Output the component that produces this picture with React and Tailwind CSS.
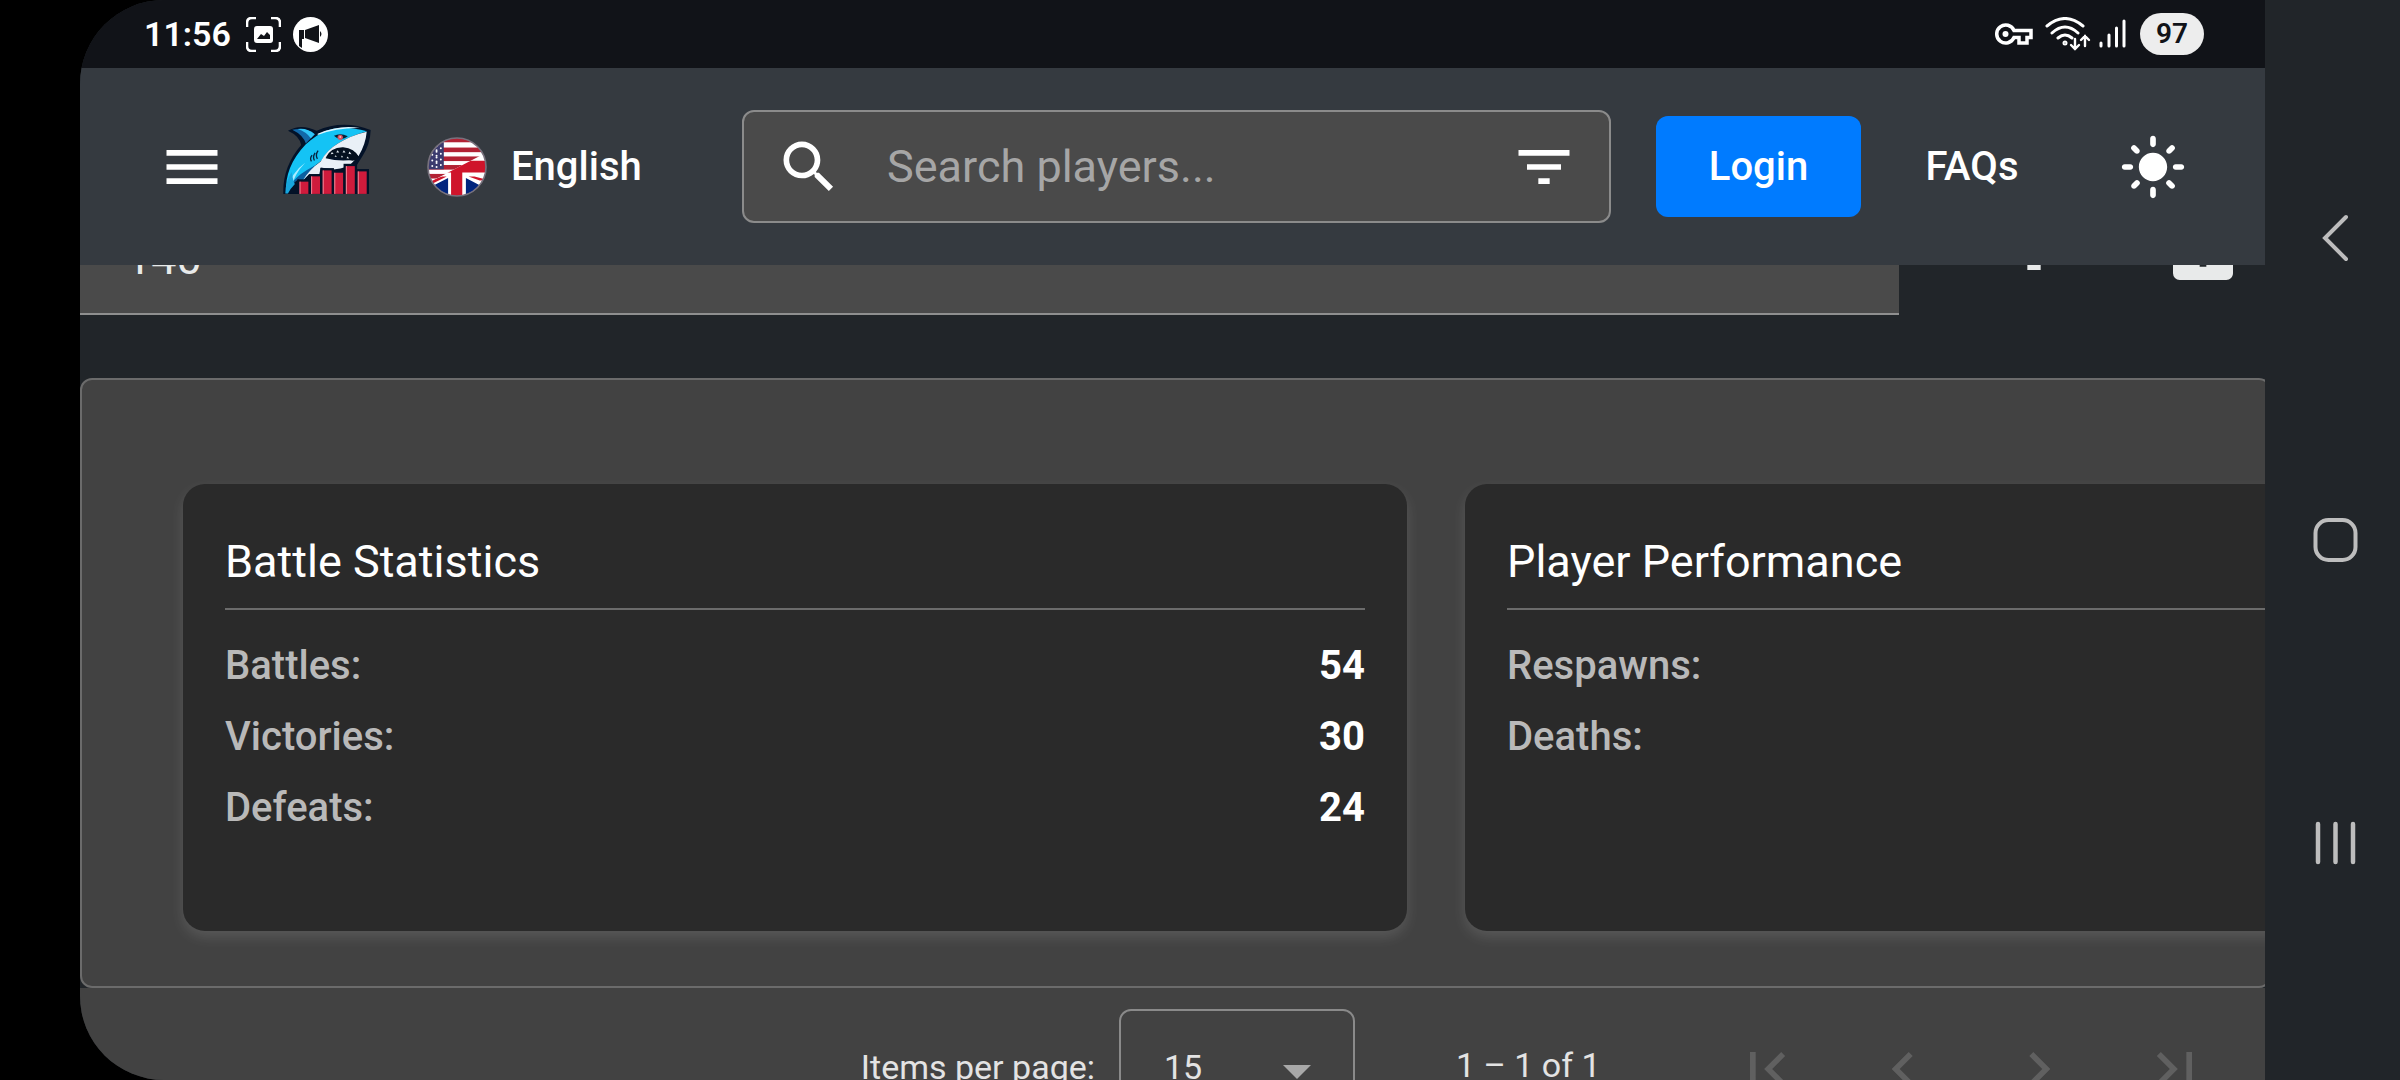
import React, { useState } from 'react';
import {
  MdMenu,
  MdSearch,
  MdFilterList,
  MdLightMode,
  MdAddBox,
  MdFirstPage,
  MdChevronLeft,
  MdChevronRight,
  MdLastPage,
} from 'react-icons/md';

const cards = [
  {
    title: 'Battle Statistics',
    rows: [
      { label: 'Battles:', value: 54 },
      { label: 'Victories:', value: 30 },
      { label: 'Defeats:', value: 24 },
    ],
  },
  {
    title: 'Player Performance',
    rows: [
      { label: 'Respawns:', value: '' },
      { label: 'Deaths:', value: '' },
    ],
  },
];

// Left edge and top of each red bar under the shark
const logoBars = [
  [718, 545],
  [753, 529],
  [788, 511],
  [823, 518],
  [858, 498],
  [894, 514],
];

function SharkLogo() {
  return (
    <svg viewBox="668 368 266 214" className="h-[71px] w-[88px]" aria-hidden="true">
      <path d="M683 391Q722 368 770 391Q850 356 933 389Q932 432 908 468L888 500L740 582H669Q666 500 723 434Q718 407 683 391Z" fill="#031228" />
      <path d="M696 388Q736 379 764 402L737 430Q729 404 696 388Z" fill="#1268a8" />
      <path d="M712 386Q742 382 764 402L752 414Q738 394 712 386Z" fill="#2fc4f7" />
      <path d="M677 581Q672 500 737 432Q770 402 800 390Q850 372 922 393Q868 408 830 432Q800 452 784 482Q730 520 677 581Z" fill="#14c3f5" />
      <path d="M773 400Q840 372 900 383Q830 382 773 404Z" fill="#dff6ff" />
      <path d="M682 578Q690 530 778 490Q740 525 712 566Q700 574 682 581Z" fill="#0b5f9f" />
      <path d="M684 568Q690 520 735 488Q702 522 692 566Z" fill="#a9ecff" />
      <path d="M921 394Q918 432 896 468Q880 446 848 444Q815 446 797 474Q840 486 886 478Q866 506 820 508L782 502L778 522L745 524L728 541Q748 508 782 484Q800 450 834 430Q870 406 921 394Z" fill="#e9f0f7" />
      <path d="M797 473Q812 440 850 441Q884 444 898 471Q888 482 878 482Q830 468 797 473Z" fill="#04101f" />
      <path d="M812 462l4-7l5 6zM829 457l4-7l5 7zM848 457l4-7l5 7zM866 461l3-7l6 8zM824 470l3-5l4 5zM843 471l3-5l4 5zM860 474l3-5l5 6z" fill="#dfe6ec" />
      <path d="M822 406Q842 396 864 408Q842 426 822 406Z" fill="#072036" />
      <circle cx="841" cy="411" r="8" fill="#d9525f" />
      <circle cx="841" cy="410" r="3" fill="#f7b9bb" />
      <path d="M756 465Q748 475 754 484M765 458Q757 470 763 481M774 451Q765 464 772 476" fill="none" stroke="#062440" strokeWidth="4" />
      {logoBars.map(([x, y]) => (
        <g key={x}>
          <rect x={x - 7} y={y - 7} width="41" height={589 - y} fill="#031228" />
          <rect x={x} y={y} width="27" height={582 - y} fill="#cf1b3c" />
          <rect x={x} y={y} width="3" height={582 - y} fill="#f08a9b" />
        </g>
      ))}
      <path d="M677 581Q700 545 716 538V582Z" fill="#031228" />
      <path d="M675 581Q676 545 694 516Q700 550 704 552Q690 566 683 581Z" fill="#18a5dd" />
    </svg>
  );
}

function EnglishFlag() {
  return (
    <svg viewBox="80 168 182 182" className="size-[60px]" aria-hidden="true">
      <defs>
        <clipPath id="flag-circle">
          <circle cx="171" cy="259" r="88" />
        </clipPath>
        <clipPath id="flag-uk">
          <path d="M80 309L262 214V350H80Z" />
        </clipPath>
      </defs>
      <g clipPath="url(#flag-circle)">
        <rect x="80" y="168" width="182" height="182" fill="#fff" />
        {[170, 200, 227, 253, 280].map((y) => (
          <rect key={y} x="80" y={y} width="182" height="14" fill="#b22234" />
        ))}
        <rect x="80" y="184" width="51" height="82" fill="#3c3b6e" />
        {[196, 213, 230, 247].map((y) => (
          <g key={y} fill="#fff">
            <circle cx="96" cy={y + 9} r="3" />
            <circle cx="109" cy={y} r="3" />
            <circle cx="109" cy={y + 12} r="3" />
            <circle cx="122" cy={y + 6} r="3" />
          </g>
        ))}
        <g clipPath="url(#flag-uk)">
          <rect x="80" y="200" width="182" height="150" fill="#fff" />
          <path d="M144 292V345H120L98 316ZM198 292V345H222L240 314Z" fill="#00247d" />
          <path d="M84 302L126 288H140L96 310ZM206 288H224L262 298L240 300Z" fill="#cf142b" />
          <path d="M80 240H262V276H187V350H153V276H80Z" fill="#cf142b" />
        </g>
      </g>
      <circle cx="171" cy="259" r="88" fill="none" stroke="#77717d" strokeWidth="5" />
    </svg>
  );
}

function StatusBar() {
  return (
    <div className="flex h-[68px] items-center justify-between bg-[#111318] pr-[61px] pl-16 text-white">
      <div className="flex items-center">
        <span className="w-[102px] text-[34px] leading-none font-semibold">11:56</span>
        <svg viewBox="0 0 35 35" className="size-[35px]" fill="none" aria-hidden="true">
          <path d="M1 10V6Q1 1 6 1H10M25 1H29Q34 1 34 6V10M34 25V29Q34 34 29 34H25M10 34H6Q1 34 1 29V25" stroke="#fff" strokeWidth="2.6" />
          <rect x="8" y="9" width="19" height="17" rx="3" fill="#fff" />
          <path d="M11 22L15 17L18 19L21 15L24 18V22Z" fill="#111318" />
        </svg>
        <svg viewBox="0 0 35 35" className="ml-3 size-[35px]" aria-hidden="true">
          <circle cx="17.5" cy="17.5" r="17.5" fill="#fff" />
          <path d="M6 13H11V22H9V31L6 29ZM12 13L26 8V26L12 21ZM27 14Q30 17 27 20Z" fill="#111318" />
        </svg>
      </div>
      <div className="flex items-center">
        <svg viewBox="0 0 38 22" className="h-[22px] w-[38px]" fill="none" aria-hidden="true">
          <path d="M19 7.5A9 9 0 1 0 19 14.5H24V20H32V14.5H36V7.5Z" stroke="#fff" strokeWidth="3.5" />
          <circle cx="10.5" cy="11" r="3" fill="#fff" />
        </svg>
        <svg viewBox="0 0 46 35" className="ml-3 h-[35px] w-[46px]" fill="none" stroke="#fff" strokeWidth="3" strokeLinecap="round" aria-hidden="true">
          <path d="M2 9Q20 -6 38 9M7 16Q20 4 33 16M13 21Q20 15 27 21" />
          <circle cx="20" cy="26" r="1" />
          <path d="M30 22V32M26 28L30 32L34 28M40 29V19M36 23L40 19L44 23" strokeWidth="2.4" />
        </svg>
        <svg viewBox="0 0 27 30" className="ml-2 h-[30px] w-[27px]" stroke="#fff" strokeWidth="3" strokeLinecap="round" aria-hidden="true">
          <path d="M2 24V27M10 16V27M17.5 9V27M25 2V27" />
        </svg>
        <span className="ml-[14px] flex h-[42px] w-16 items-center justify-center rounded-full bg-[#ededed] text-[28px] font-semibold text-[#111318]">
          97
        </span>
      </div>
    </div>
  );
}

function Header() {
  const [search, setSearch] = useState('');

  return (
    <header className="flex items-center bg-[#353a40] px-[78px] py-[42px] text-white">
      <button type="button" aria-label="Menu">
        <MdMenu className="size-[68px]" />
      </button>
      <a href="#home" aria-label="Home" className="ml-[57px] pb-4">
        <SharkLogo />
      </a>
      <button type="button" className="ml-14 flex w-[232px] items-center gap-6 text-[40px] font-medium">
        <EnglishFlag />
        English
      </button>
      <div className="ml-[83px] flex h-[113px] min-w-0 flex-1 items-center rounded-xl border-2 border-[#8b8b8b] bg-[#4a4a4a] px-[31px]">
        <MdSearch className="size-[68px] shrink-0" />
        <input
          type="text"
          aria-label="Search players"
          placeholder="Search players..."
          value={search}
          onChange={(e) => setSearch(e.target.value)}
          className="ml-11 min-w-0 flex-1 bg-transparent text-[45px] outline-none placeholder:text-[#a6a6a6]"
        />
        <button type="button" aria-label="Filter players">
          <MdFilterList className="size-[68px]" />
        </button>
      </div>
      <button type="button" className="ml-[45px] h-[101px] w-[205px] rounded-xl bg-[#007bff] text-[40px] font-medium">
        Login
      </button>
      <a href="#faqs" className="ml-[61px] w-[100px] text-center text-[40px] font-medium">
        FAQs
      </a>
      <button type="button" aria-label="Toggle theme" className="ml-[97px]">
        <MdLightMode className="size-[68px]" />
      </button>
    </header>
  );
}

function StatCard({ title, rows }) {
  return (
    <section className="min-h-[447px] w-[51vw] shrink-0 rounded-[22px] bg-[#2a2a2a] px-[42px] pt-12 shadow-[0_6px_14px_rgba(255,255,255,0.12)]">
      <h2 className="border-b-2 border-[#6b6b6b] pb-4 text-[45px] leading-[60px] text-white">{title}</h2>
      <dl className="mt-5">
        {rows.map((row) => (
          <div key={row.label} className="flex justify-between text-[40px] leading-[71px]">
            <dt className="font-medium text-[#b9b9b9]">{row.label}</dt>
            <dd className="font-bold text-white">{row.value}</dd>
          </div>
        ))}
      </dl>
    </section>
  );
}

function Paginator() {
  const [pageSize, setPageSize] = useState('15');

  return (
    <div className="flex items-center justify-end bg-[#424242] pt-[21px] pr-7 pb-10 text-[34px] text-[#e3e3e3]">
      <label htmlFor="page-size" className="pb-1">Items per page:</label>
      <div className="relative ml-6">
        <select
          id="page-size"
          value={pageSize}
          onChange={(e) => setPageSize(e.target.value)}
          className="h-[120px] w-[236px] appearance-none rounded-xl border-2 border-[#8a8a8a] bg-transparent pb-1 pl-[43px]"
        >
          <option value="15">15</option>
          <option value="30">30</option>
          <option value="50">50</option>
        </select>
        <svg viewBox="0 0 28 14" className="pointer-events-none absolute top-14 right-11 h-[14px] w-7" aria-hidden="true">
          <path d="M0 0H28L14 14Z" fill="#a8a8a8" />
        </svg>
      </div>
      <span className="ml-[101px] w-[152px] pb-2">1 – 1 of 1</span>
      <div className="ml-[91px] flex text-[#606060]">
        <button type="button" disabled aria-label="First page" className="flex w-[136px] justify-center">
          <MdFirstPage className="size-[68px]" />
        </button>
        <button type="button" disabled aria-label="Previous page" className="flex w-[136px] justify-center">
          <MdChevronLeft className="size-[68px]" />
        </button>
        <button type="button" disabled aria-label="Next page" className="flex w-[136px] justify-center">
          <MdChevronRight className="size-[68px]" />
        </button>
        <button type="button" disabled aria-label="Last page" className="flex w-[136px] justify-center">
          <MdLastPage className="size-[68px]" />
        </button>
      </div>
    </div>
  );
}

function SystemNav() {
  return (
    <nav className="flex w-[135px] shrink-0 flex-col items-center justify-between bg-[#212529] py-[207px] text-[#bdbdbd]">
      <button type="button" aria-label="Back">
        <svg viewBox="0 0 62 62" className="size-[62px]" fill="none" stroke="currentColor" strokeWidth="4" strokeLinecap="round">
          <path d="M44 10L23 31L44 52" />
        </svg>
      </button>
      <button type="button" aria-label="Home screen">
        <svg viewBox="0 0 62 62" className="size-[62px]" fill="none" stroke="currentColor" strokeWidth="4">
          <rect x="13.5" y="11" width="40" height="40" rx="13" />
        </svg>
      </button>
      <button type="button" aria-label="Recent apps">
        <svg viewBox="0 0 62 62" className="size-[62px]" fill="none" stroke="currentColor" strokeWidth="4.5" strokeLinecap="round">
          <path d="M16 13V51M33.5 13V51M51 13V51" />
        </svg>
      </button>
    </nav>
  );
}

function App() {
  const [amount, setAmount] = useState('140');

  return (
    <div className="flex h-screen overflow-hidden bg-black pl-20 font-['Roboto',sans-serif]">
      <div className="flex min-w-0 flex-1 flex-col overflow-hidden rounded-l-[84px] bg-[#212529]">
        <StatusBar />
        <Header />
        <main className="min-h-0 flex-1 overflow-hidden">
          {/* Page is scrolled, so the filter row is half under the header */}
          <div className="-mt-[109px] -mr-1.5">
            <div className="flex items-center text-[#e8eaea]">
              <input
                type="text"
                aria-label="Filter"
                value={amount}
                onChange={(e) => setAmount(e.target.value)}
                className="h-[159px] min-w-0 flex-1 border-b-2 border-[#8f8f8f] bg-[#4a4a4a] px-[46px] pt-[68px] pb-[21px] text-[45px] outline-none"
              />
              <button type="button" aria-label="Filter list" className="ml-[67px] flex w-[136px] justify-center pt-7">
                <MdFilterList className="size-20" />
              </button>
              <button type="button" aria-label="Add" className="ml-[33px] flex w-[136px] justify-center pt-7">
                <MdAddBox className="size-20" />
              </button>
            </div>
            <div className="mt-[63px] rounded-xl border-2 border-[#6b6b6b] bg-[#424242] pt-[104px] pb-[55px] pl-[101px]">
              <div className="flex gap-[58px]">
                {cards.map((card) => (
                  <StatCard key={card.title} title={card.title} rows={card.rows} />
                ))}
              </div>
            </div>
            <Paginator />
          </div>
        </main>
      </div>
      <SystemNav />
    </div>
  );
}

export default App;
